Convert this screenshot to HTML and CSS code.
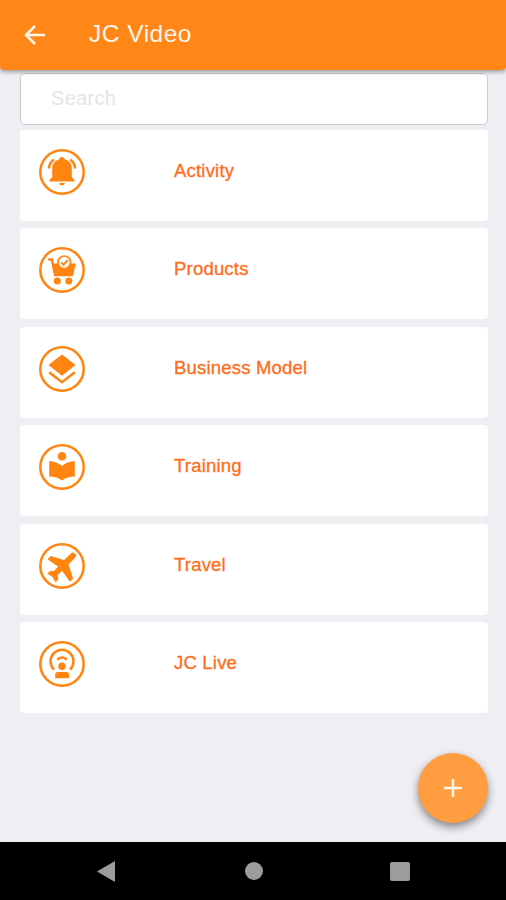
FILE: index.html
```html
<!DOCTYPE html>
<html lang="en">
<head>
    <meta charset="UTF-8">
    <meta name="viewport" content="width=device-width, initial-scale=1.0">
    <title>JC Video</title>
    <link rel="stylesheet" href="styles.css">
</head>
<body>

<div class="header">
    <svg class="back" viewBox="0 0 22 20">
        <path d="M21 10H2.5M11 1L2 10l9 9"/>
    </svg>
    <h1>JC Video</h1>
</div>

<div class="content">
    <input class="search" type="text" placeholder="Search">

    <div class="list">
        <div class="card">
            <svg class="icon" viewBox="9 9 46 46">
                <circle class="line" cx="32" cy="32" r="21.7"/>
                <path d="M32 17a2.900 2.900 0 0 1 2.900 2.600c4.600 1.200 6.900 4.700 6.900 8.800v8.600l2.800 3.200v1.300H19.400v-1.300l2.800-3.200v-8.600c0-4.100 2.300-7.600 6.900-8.800a2.900 2.900 0 0 1 2.900-2.600zM29.300 43h5.400a2.700 2.500 0 0 1-5.400 0z"/>
                <path class="line" d="M18.9 28.5c.4-3.8 2.2-6.800 5-8.900M45.200 28.500c-.4-3.800-2.200-6.800-5-8.900"/>
            </svg>
            <span>Activity</span>
        </div>
        <div class="card">
            <svg class="icon" viewBox="9 9 46 46">
                <circle class="line" cx="32" cy="32" r="21.7"/>
                <path class="line" d="M18.2 21.500h3.700l3.200 15.500h17.400"/>
                <path d="M22.8 25.500h23l-2.800 12.500H25.200z"/>
                <circle class="badge" cx="34.2" cy="24.300" r="6.300"/>
                <path class="tick" d="M31 24.400l2.500 2.400 4.200-4.600"/>
                <circle cx="27.3" cy="43" r="3.500"/>
                <circle cx="38.8" cy="43" r="3.500"/>
            </svg>
            <span>Products</span>
        </div>
        <div class="card">
            <svg class="icon" viewBox="9 9 46 46">
                <circle class="line" cx="32" cy="32" r="21.7"/>
                <path d="M32 17.500l13.500 10.600L32 38.800 18.500 28.100z"/>
                <path class="line" d="M19.200 35.200L32 45.200l12.800-10"/>
            </svg>
            <span>Business Model</span>
        </div>
        <div class="card">
            <svg class="icon" viewBox="9 9 46 46">
                <circle class="line" cx="32" cy="32" r="21.7"/>
                <circle cx="32" cy="21.300" r="4.300"/>
                <path d="M19.200 26c5 .3 9.400 2 12.800 5 3.400-3 7.800-4.700 12.800-5v15.400c-5 .2-9.400 1.200-12.800 4.200-3.400-3-7.800-4-12.800-4.200z"/>
            </svg>
            <span>Training</span>
        </div>
        <div class="card">
            <svg class="icon" viewBox="9 9 46 46">
                <circle class="line" cx="32" cy="32" r="21.7"/>
                <path class="plane" d="M44.800 19.800c1.300 1.600.8 3-.6 4.400l-6.200 6.200 4.700 14.200-2.600 2.600-7.900-11-5 5 .6 4.400-2.100 2.100-3.200-5.400-4.600-2.800 2.100-2.100 3.800.2 5-5-10.700-7.300 2.600-2.800 13.400 4.100 6.200-6.200c1.500-1.500 3.200-1.900 4.500-.6z"/>
            </svg>
            <span>Travel</span>
        </div>
        <div class="card">
            <svg class="icon" viewBox="9 9 46 46">
                <circle class="line" cx="32" cy="32" r="21.7"/>
                <path class="arc" d="M24 37.600a11.500 11.500 0 1 1 16 0M27.300 27.800a6 6 0 0 1 9.400 0"/>
                <circle cx="32" cy="34.200" r="3.700"/>
                <path d="M28 40h8.300a2.800 2.800 0 0 1 2.800 2.800v3.500H25.200v-3.500A2.800 2.800 0 0 1 28 40z"/>
            </svg>
            <span>JC Live</span>
        </div>
    </div>

    <button class="fab">
        <svg viewBox="0 0 18 18"><path d="M9 0v18M0 9h18"/></svg>
    </button>
</div>

<div class="navbar">
    <svg class="nav-back" viewBox="0 0 18 21"><path d="M0 10.500L18 0v21z"/></svg>
    <div class="nav-home"></div>
    <div class="nav-recent"></div>
</div>

</body>
</html>
```
FILE: styles.css
```css
* {
    box-sizing: border-box;
}
body {
    margin: 0;
    height: 900px;
    display: flex;
    flex-direction: column;
    background-color: #efeef3;
    font-family: "Liberation Sans", Arial, sans-serif;
    overflow: hidden;
}
.header {
    display: flex;
    align-items: center;
    height: 70px;
    flex: none;
    padding-left: 24px;
    background-color: #ff8617;
    border-radius: 0 0 4px 4px;
    box-shadow: 0 2px 4px rgba(0, 0, 0, 0.35);
    color: #fff6ea;
    position: relative;
    z-index: 1;
}
.header h1 {
    margin: 0 0 2px 43px;
    font-size: 24.500px;
    font-weight: normal;
    letter-spacing: 0.500px;
}
.back {
    width: 22px;
    height: 20px;
    fill: none;
    stroke: #fff6ea;
    stroke-width: 2.600;
}
.content {
    position: relative;
    flex: 1;
    padding: 3px 18px 0 20px;
}
.search {
    display: block;
    width: 468px;
    height: 52px;
    padding: 0 30px 2px;
    border: 1px solid #ccccd0;
    border-radius: 5px;
    background-color: #fff;
    font-family: inherit;
    font-size: 20px;
    letter-spacing: 0.3px;
    outline: none;
}
.search::placeholder {
    color: #e4e4e6;
}
.list {
    display: flex;
    flex-direction: column;
    gap: 7.500px;
    margin-top: 4.500px;
}
.card {
    display: flex;
    align-items: center;
    height: 91px;
    padding: 0 19px 7px;
    border-radius: 4px;
    background-color: #fff;
    color: #ff6d1a;
    font-size: 18.500px;
    letter-spacing: 0.200px;
    -webkit-text-stroke: 0.3px #ff6d1a;
}
.card span {
    margin-bottom: 2px;
}
.icon {
    width: 46px;
    height: 46px;
    margin-right: 89px;
    fill: #ff8510;
}
.icon .line,
.icon .arc {
    fill: none;
    stroke: #ff8510;
    stroke-width: 2.500;
}
.icon .badge {
    fill: #fff;
    stroke: #ff8510;
    stroke-width: 1.700;
}
.icon .tick {
    fill: none;
    stroke: #ff8510;
    stroke-width: 2;
}
.icon .plane {
    stroke: #ff8510;
    stroke-width: 1;
    stroke-linejoin: round;
}
/* floating add button */
.fab {
    position: absolute;
    right: 18px;
    bottom: 19px;
    display: flex;
    align-items: center;
    justify-content: center;
    width: 70px;
    height: 70px;
    padding: 0;
    border: none;
    border-radius: 50%;
    background-color: #ff9d40;
    box-shadow: 0 4px 8px rgba(0, 0, 0, 0.45);
}
.fab svg {
    width: 18px;
    height: 18px;
    stroke: #fff6ea;
    stroke-width: 2.500;
}
.navbar {
    display: flex;
    align-items: center;
    flex: none;
    height: 58px;
    padding-left: 97px;
    background-color: #000;
}
.nav-back {
    width: 18px;
    height: 21px;
    fill: #9c9c9c;
}
.nav-home {
    width: 18px;
    height: 18px;
    margin-left: 130px;
    border-radius: 50%;
    background-color: #9c9c9c;
}
.nav-recent {
    width: 20px;
    height: 19px;
    margin-left: 127px;
    border-radius: 2px;
    background-color: #9c9c9c;
}
```
